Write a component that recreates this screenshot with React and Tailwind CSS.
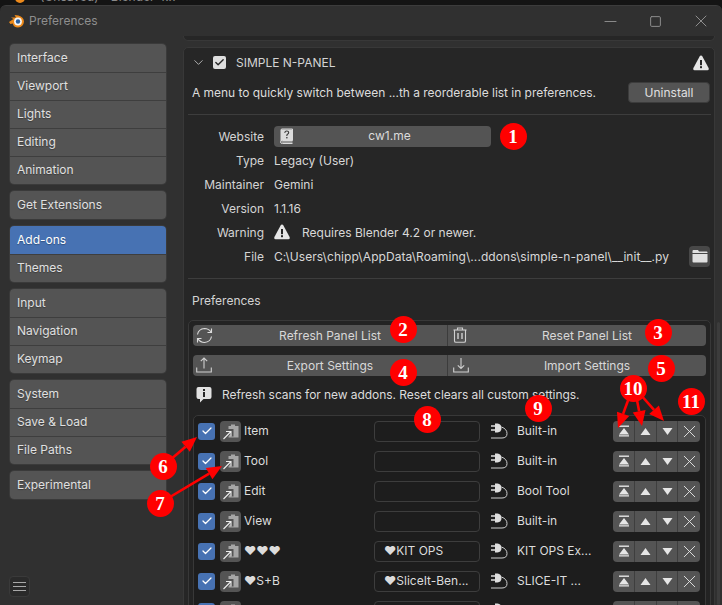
import React from 'react';
import { ChevronDown, Check, X, Minus, Square } from 'lucide-react';

const sidebarGroups = [
  ['Interface', 'Viewport', 'Lights', 'Editing', 'Animation'],
  ['Get Extensions'],
  ['Add-ons', 'Themes'],
  ['Input', 'Navigation', 'Keymap'],
  ['System', 'Save & Load', 'File Paths'],
  ['Experimental'],
];

const details = [
  ['Type', 'Legacy (User)'],
  ['Maintainer', 'Gemini'],
  ['Version', '1.1.16'],
];

const panels = [
  ['Item', '', 'Built-in'],
  ['Tool', '', 'Built-in'],
  ['Edit', '', 'Bool Tool'],
  ['View', '', 'Built-in'],
  ['♥♥♥', '♥KIT OPS', 'KIT OPS Ex...'],
  ['♥S+B', '♥SliceIt-Ben...', 'SLICE-IT ...'],
  ['', '', ''],
];

const badges = [
  { n: 1, x: 513, y: 136 },
  { n: 2, x: 403, y: 329 },
  { n: 3, x: 658, y: 332 },
  { n: 4, x: 403, y: 372 },
  { n: 5, x: 661, y: 368 },
  { n: 6, x: 163, y: 466 },
  { n: 7, x: 160, y: 503 },
  { n: 8, x: 427, y: 419 },
  { n: 9, x: 538, y: 408 },
  { n: 10, x: 633, y: 388 },
  { n: 11, x: 691, y: 401 },
];

const arrows = [
  [163, 466, 197, 437],
  [160, 503, 222, 466],
  [630, 395, 618, 428],
  [636, 395, 642, 426],
  [640, 394, 664, 421],
];

const BlenderLogo = () => (
  <svg width="15" height="14" viewBox="0 0 15 14">
    <path d="M0 8 L4.5 5 L2 3.6 L7 3.4 L5.5 1 L9.5 1.6 Q14.5 3 15 7.5 Q14.5 13 9 13.5 Q4.5 13.5 3.8 9.5 L1.4 10 Z" fill="#ed8a1b" />
    <circle cx="9" cy="7.5" r="3.9" fill="#f6f6f6" />
    <circle cx="9" cy="7.5" r="2.2" fill="#2a5f9e" />
  </svg>
);

const WarningIcon = () => (
  <svg width="16" height="16" viewBox="0 0 16 16">
    <path d="M8 0.5 Q8.9 0.5 9.4 1.4 L15.6 13 Q16.2 15 14.4 15.2 L1.6 15.2 Q-0.2 15 0.4 13 L6.6 1.4 Q7.1 0.5 8 0.5 Z" fill="#e6e6e6" />
    <rect x="7" y="5" width="2" height="5.2" fill="#262626" />
    <rect x="7" y="11.2" width="2" height="2" fill="#262626" />
  </svg>
);

const BookHelp = () => (
  <svg width="15" height="17" viewBox="0 0 15 17" fill="none">
    <path d="M2 13 V2 Q2 1 3 1 H13.5 V12.5 H3.5 Q1.5 12.5 1.5 14 Q1.5 15.5 3.5 15.5 H13.5" stroke="#dcdcdc" strokeWidth="1" />
    <path d="M2 1.5 H13.5 V12.5 H3 L2 13 Z" fill="#dcdcdc" />
    <path d="M5.7 4.8 Q6 3 7.8 3 Q9.7 3 9.7 4.6 Q9.7 5.6 8.5 6.3 Q7.8 6.8 7.8 8" stroke="#3c3c3c" strokeWidth="1.1" />
    <rect x="7.2" y="9" width="1.3" height="1.4" fill="#3c3c3c" />
    <path d="M3 14 H13.5" stroke="#dcdcdc" strokeWidth="1" />
  </svg>
);

const FolderIcon = () => (
  <svg width="16" height="14" viewBox="0 0 16 14">
    <path d="M0.5 2 Q0.5 1 1.5 1 H6 L7 2.5 H14.5 Q15.5 2.5 15.5 3.5 V4 H0.5 Z" fill="#e0e0e0" />
    <path d="M0.5 5 H15.5 V12.5 Q15.5 13.5 14.5 13.5 H1.5 Q0.5 13.5 0.5 12.5 Z" fill="#e0e0e0" />
  </svg>
);

const RefreshIcon = () => (
  <svg width="17" height="17" viewBox="0 0 17 17" fill="none" stroke="#dcdcdc" strokeWidth="1.1">
    <path d="M1.5 7.5 Q2.5 2 8.5 1.5 Q12.5 1.5 15 4.8" />
    <path d="M15.5 1.5 V5.5 H11.5" />
    <path d="M15.5 9.5 Q14.5 15 8.5 15.5 Q4.5 15.5 2 12.2" />
    <path d="M1.5 15.5 V11.5 H5.5" />
  </svg>
);

const TrashIcon = () => (
  <svg width="14" height="16" viewBox="0 0 14 16" fill="none" stroke="#d0d0d0" strokeWidth="1.1">
    <path d="M0.5 3 H13.5" />
    <path d="M4.5 3 V1 H9.5 V3" />
    <path d="M1.5 3 V14 Q1.5 15.3 3 15.3 H11 Q12.5 15.3 12.5 14 V3" />
    <path d="M5 6 V12 M9 6 V12" strokeWidth="1.4" />
  </svg>
);

const ExportIcon = () => (
  <svg width="16" height="16" viewBox="0 0 16 16" fill="none" stroke="#d0d0d0" strokeWidth="1.1">
    <path d="M0.7 10.5 V15 H15.3 V10.5" />
    <path d="M8 11.5 V1 M4.8 4.2 L8 1 L11.2 4.2" />
  </svg>
);

const ImportIcon = () => (
  <svg width="16" height="16" viewBox="0 0 16 16" fill="none" stroke="#d0d0d0" strokeWidth="1.1">
    <path d="M0.7 10.5 V15 H15.3 V10.5" />
    <path d="M8 1 V11.5 M4.8 8.3 L8 11.5 L11.2 8.3" />
  </svg>
);

const InfoBubble = () => (
  <svg width="16" height="18" viewBox="0 0 16 18">
    <path d="M2.5 1 H13.5 Q15.5 1 15.5 3 V11 Q15.5 13 13.5 13 H7.5 L4 16.5 V13 H2.5 Q0.5 13 0.5 11 V3 Q0.5 1 2.5 1 Z" fill="#e2e2e2" />
    <rect x="7" y="3" width="2" height="2" fill="#262626" />
    <rect x="7" y="6" width="2" height="5" fill="#262626" />
  </svg>
);

const PanelIcon = () => (
  <svg width="17" height="17" viewBox="0 0 17 17" fill="none">
    <path d="M6.5 3 H9 V1.5 H13 V3 H16.5 V14.5 H6.5 Z" fill="#a6a6a6" />
    <path d="M1 16.5 L9 8.5 M4 7.5 H10 V13.5" stroke="#545454" strokeWidth="3" />
    <path d="M1.5 16 L8.5 9 M4 8.5 H9 V13.5" stroke="#ececec" strokeWidth="1.1" />
  </svg>
);

const PlugIcon = () => (
  <svg width="18" height="18" viewBox="0 0 18 18" fill="none">
    <path d="M5 1.5 H7.5 Q11.5 2 11.5 6 Q11.5 10 7.5 10.5 H5 Z" fill="#dedede" />
    <path d="M1 4 H5 M1 8 H5" stroke="#dedede" strokeWidth="1.3" />
    <path d="M11.5 5 Q17 7 17 11.5 Q17 16 12 16 H1" stroke="#cfcfcf" strokeWidth="1" />
  </svg>
);

const TopIcon = () => (
  <svg width="12" height="12" viewBox="0 0 12 12">
    <rect x="1" y="0.5" width="10" height="1.4" fill="#e6e6e6" />
    <path d="M6 3 L11 9.5 H1 Z M1 10.2 H11 V11.5 H1 Z" fill="#e6e6e6" />
  </svg>
);

const Triangle = ({ down }) => (
  <svg width="11" height="9" viewBox="0 0 11 9">
    <path d={down ? 'M0.5 1 H10.5 L5.5 8 Z' : 'M5.5 1 L10.5 8 H0.5 Z'} fill="#e6e6e6" />
  </svg>
);

const Sidebar = () => (
  <div className="w-[183px] shrink-0 pl-[10px] pr-[17px] pt-[8px] flex flex-col gap-[7px]">
    {sidebarGroups.map((group, i) => (
      <div key={i} className="flex flex-col rounded-[4px] overflow-hidden ring-1 ring-[#3a3a3a]">
        {group.map((item, j) => (
          <div
            key={item}
            className={`h-[28px] flex items-center pl-[7px] [text-shadow:0_1px_1px_#0000004d] ${
              j > 0 ? 'border-t border-[#3e3e3e] pb-[1px]' : ''
            } ${item === 'Add-ons' ? 'bg-[#4772b3] text-white' : 'bg-[#545454] text-[#e0e0e0]'}`}
          >
            {item}
          </div>
        ))}
      </div>
    ))}
    <div className="mt-auto mb-[8px] -ml-px w-[21px] h-[21px] rounded-[4px] bg-[#2a2a2a] border border-[#3a3a3a] flex flex-col items-center justify-center gap-[3px]">
      <div className="w-[13px] h-px bg-[#a8a8a8]" />
      <div className="w-[13px] h-px bg-[#a8a8a8]" />
      <div className="w-[13px] h-px bg-[#a8a8a8]" />
    </div>
  </div>
);

const WideButton = ({ icon, label, first }) => (
  <div className={`flex items-center relative justify-center pl-[20px] ${first ? 'w-[255px] border-r border-[#3c3c3c]' : 'flex-1'}`}>
    <div className={`absolute top-[2px] ${first ? 'left-[3px]' : 'left-[5px]'}`}>{icon}</div>
    <span className="text-[#d8d8d8]">{label}</span>
  </div>
);

const PanelRow = ({ name, category, source }) => (
  <div className="h-[30px] flex items-center">
    <div className="w-[17px] h-[17px] ml-[4px] rounded-[3px] bg-[#4772b3] flex items-center justify-center">
      <Check size={12} strokeWidth={2.5} color="#fff" />
    </div>
    <div className="w-[21px] h-[21px] ml-[5px] rounded-[4px] bg-[#545454] flex items-center justify-center">
      <PanelIcon />
    </div>
    <span className="w-[130px] ml-[3px] text-[#dcdcdc]">{name}</span>
    <div className="w-[106px] h-[21px] rounded-[4px] border border-[#3d3d3d] bg-[#1d1d1d] flex items-center pl-[9px] text-[#dcdcdc] overflow-hidden whitespace-nowrap">
      {category}
    </div>
    <div className="ml-[10px] w-[27px]">
      <PlugIcon />
    </div>
    <span className="w-[96px] text-[#dcdcdc] whitespace-nowrap">{source}</span>
    <div className="w-[87px] h-[21px] rounded-[4px] bg-[#545454] flex overflow-hidden">
      <div className="w-[22px] flex items-center justify-center border-r border-[#3e3e3e]"><TopIcon /></div>
      <div className="w-[22px] flex items-center justify-center border-r border-[#3e3e3e]"><Triangle /></div>
      <div className="w-[21px] flex items-center justify-center border-r border-[#3e3e3e]"><Triangle down /></div>
      <div className="flex-1 flex items-center justify-center"><X size={21} strokeWidth={1.1} color="#e0e0e0" /></div>
    </div>
  </div>
);

const DetailRow = ({ label, children }) => (
  <div className="h-[24px] flex items-center">
    <div className="w-[76px] text-right text-[#d4d4d4] mr-[10px] pt-[2px]">{label}</div>
    {children}
  </div>
);

const AddonPanel = () => (
  <div className="mt-[6px] h-[600px] rounded-t-[5px] border border-[#383838] bg-[#262626] pl-[4px] pr-[3px]">
    <div className="h-[29px] flex items-center pl-[3px] pr-[2px]">
      <ChevronDown size={15} strokeWidth={1.2} color="#d8d8d8" />
      <div className="ml-[7px] w-[13px] h-[13px] rounded-[2px] bg-[#dedede] flex items-center justify-center">
        <Check size={11} strokeWidth={3} color="#262626" />
      </div>
      <span className="ml-[10px] text-[#d4d4d4]">SIMPLE N-PANEL</span>
      <div className="ml-auto"><WarningIcon /></div>
    </div>
    <div className="mt-[5px] h-[21px] flex items-center pl-[4px]">
      <span className="text-[#dcdcdc] tracking-[-0.03px]">A menu to quickly switch between ...th a reorderable list in preferences.</span>
      <div className="ml-auto mr-[1px] w-[82px] h-[21px] rounded-[4px] bg-[#545454] border border-[#3c3c3c] flex items-center justify-center text-[#e0e0e0]">
        Uninstall
      </div>
    </div>
    <div className="mt-[11px] h-px bg-[#3d3d3d]" />
    <div className="mt-[9px] flex flex-col">
      <DetailRow label="Website">
        <div className="w-[217px] h-[21px] rounded-[4px] bg-[#545454] relative flex items-center justify-center text-[#dcdcdc] pl-[14px]">
          <div className="absolute left-[5px] top-[2px]"><BookHelp /></div>
          cw1.me
        </div>
      </DetailRow>
      {details.map(([label, value]) => (
        <DetailRow key={label} label={label}>
          <span className="text-[#d8d8d8] pt-[2px]">{value}</span>
        </DetailRow>
      ))}
      <DetailRow label="Warning">
        <WarningIcon />
        <span className="ml-[12px] text-[#d8d8d8] pt-[2px]">Requires Blender 4.2 or newer.</span>
      </DetailRow>
      <DetailRow label="File">
        <span className="text-[#d8d8d8] whitespace-nowrap pt-[2px] tracking-[0.06px]">C:\Users\chipp\AppData\Roaming\...ddons\simple-n-panel\__init__.py</span>
        <div className="ml-auto mr-[1px] w-[21px] h-[21px] rounded-[4px] bg-[#484848] flex items-center justify-center">
          <FolderIcon />
        </div>
      </DetailRow>
    </div>
    <div className="mt-[10px] h-px bg-[#3d3d3d]" />
    <div className="mt-[9px] h-[24px] flex items-center pl-[4px] pt-[2px] text-[#d4d4d4]">Preferences</div>
    <div className="mt-[8px] h-[400px] rounded-t-[5px] border border-[#383838] bg-[#232323] pt-[4px] px-[4px]">
      <div className="h-[21px] rounded-[4px] bg-[#545454] flex">
        <WideButton first icon={<RefreshIcon />} label="Refresh Panel List" />
        <WideButton icon={<TrashIcon />} label="Reset Panel List" />
      </div>
      <div className="mt-[9px] h-[21px] rounded-[4px] bg-[#545454] flex">
        <WideButton first icon={<ExportIcon />} label="Export Settings" />
        <WideButton icon={<ImportIcon />} label="Import Settings" />
      </div>
      <div className="mt-[9px] h-[20px] flex items-center pl-[3px]">
        <InfoBubble />
        <span className="ml-[10px] text-[#dcdcdc] tracking-[-0.06px]">Refresh scans for new addons. Reset clears all custom settings.</span>
      </div>
      <div className="mt-[10px] rounded-t-[5px] border border-[#383838] bg-[#1d1d1d]">
        {panels.map((p, i) => (
          <PanelRow key={i} name={p[0]} category={p[1]} source={p[2]} />
        ))}
      </div>
    </div>
  </div>
);

const Annotations = () => (
  <div className="absolute inset-0 pointer-events-none">
    <svg width="722" height="605" className="absolute inset-0">
      {arrows.map(([x1, y1, x2, y2], i) => {
        const a = Math.atan2(y2 - y1, x2 - x1);
        const l = 15;
        const w = 6.5;
        const bx = x2 - l * Math.cos(a);
        const by = y2 - l * Math.sin(a);
        const px = w * Math.sin(a);
        const py = w * Math.cos(a);
        return (
          <g key={i}>
            <line x1={x1} y1={y1} x2={bx} y2={by} stroke="#f00" strokeWidth="2.6" />
            <polygon points={`${x2},${y2} ${bx + px},${by - py} ${bx - px},${by + py}`} fill="#f00" />
          </g>
        );
      })}
    </svg>
    {badges.map((b) => (
      <div
        key={b.n}
        className="absolute w-[27px] h-[27px] -ml-[13.5px] -mt-[13.5px] rounded-full bg-[#f00] flex items-center justify-center text-white font-bold text-[19px] [font-family:'Liberation_Serif',serif]"
        style={{ left: b.x, top: b.y }}
      >
        {b.n}
      </div>
    ))}
  </div>
);

export default function App() {
  return (
    <div className="relative w-[722px] h-[605px] overflow-hidden bg-[#141414] text-[12px] leading-none [font-family:Inter,'Liberation_Sans',sans-serif]">
      <div className="h-[5px] overflow-hidden flex items-end pl-[15px] text-[#8a8a8a]">
        <div className="w-[10px] h-[6px] rounded-b-full bg-[#ed8a1b] self-start -mt-[3px]" />
        <span className="ml-[15px] whitespace-nowrap self-start -mt-[9px]">(Unsaved) - Blender 4.x</span>
      </div>
      <div className="h-[600px] rounded-t-[6px] bg-[#303030] border-t border-[#3c3c3c] flex flex-col">
        <div className="h-[30px] shrink-0 flex items-center pl-[9px] pr-[11px] text-[#8e8e8e]">
          <BlenderLogo />
          <span className="ml-[5px]">Preferences</span>
          <div className="ml-auto flex items-center gap-[29px]">
            <Minus size={19} strokeWidth={1.2} color="#8e8e8e" />
            <Square size={13} strokeWidth={1.8} color="#8e8e8e" />
            <X size={20} strokeWidth={1.2} color="#8e8e8e" />
          </div>
        </div>
        <div className="flex flex-1 min-h-0">
          <Sidebar />
          <div className="flex-1 pr-[7px] overflow-hidden">
            <div className="h-[5px] rounded-b-[5px] border border-t-0 border-[#383838] bg-[#262626]" />
            <AddonPanel />
          </div>
        </div>
      </div>
      <div className="absolute left-[717px] top-[322px] w-[3px] h-[283px] rounded-full bg-[#3c3c3c]" />
      <Annotations />
    </div>
  );
}
